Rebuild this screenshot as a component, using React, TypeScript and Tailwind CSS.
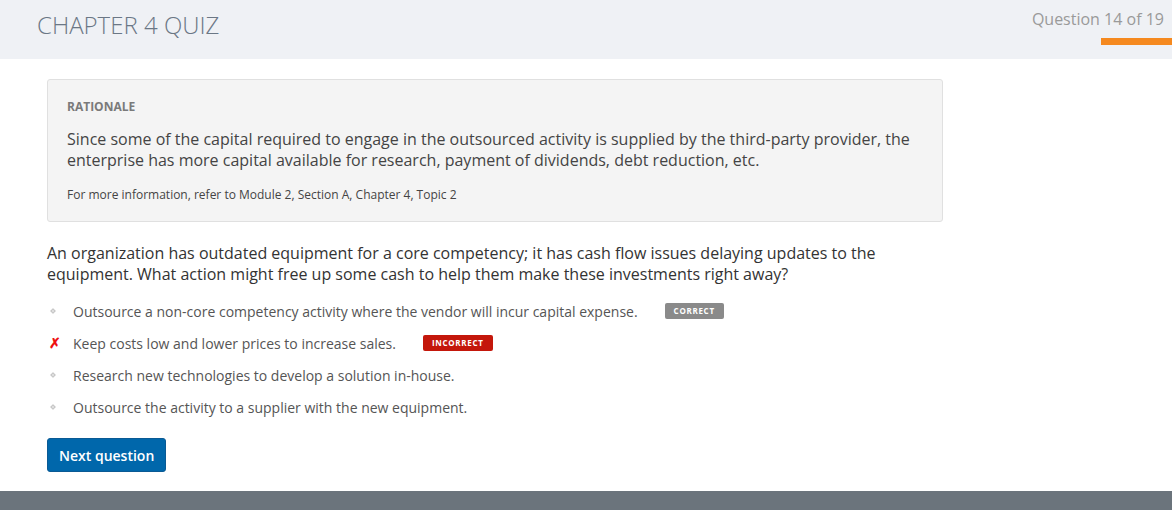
const options = [
  { text: "Outsource a non-core competency activity where the vendor will incur capital expense.", status: "correct" },
  { text: "Keep costs low and lower prices to increase sales.", status: "incorrect" },
  { text: "Research new technologies to develop a solution in-house.", status: "" },
  { text: "Outsource the activity to a supplier with the new equipment.", status: "" },
];

function Bullet({ wrong }: { wrong: boolean }) {
  if (wrong) {
    return <span className="w-[26px] pl-[2px] text-[14px] font-bold leading-none text-[#ee1111]">✗</span>;
  }
  return (
    <span className="flex w-[26px] items-center pl-[4px]">
      <span className="h-[4px] w-[4px] rotate-45 border border-[#c4c4c4] bg-[#e2e2e2]" />
    </span>
  );
}

export default function App() {
  return (
    <div className="flex h-[510px] flex-col bg-white font-['Open_Sans',sans-serif] text-[#333]">
      <header className="flex h-[59px] shrink-0 justify-between bg-[#eff1f5]">
        <h1 className="pl-[37px] pt-[8px] text-[24px] font-light leading-[34px] text-[#6b7785]">CHAPTER 4 QUIZ</h1>
        <div className="flex flex-col items-end pt-[8px]">
          <span className="pr-[8px] text-[16px] leading-[22px] text-[#9a9a9a]">Question 14 of 19</span>
          <span className="mt-[8px] h-[7px] w-[71px] bg-[#f5891f]" />
        </div>
      </header>

      <main className="flex-1 pl-[47px] pt-[20px]">
        <section className="w-[896px] rounded-[3px] border border-[#e0e0e0] bg-[#f4f4f4] px-[19px] pb-[17px] pt-[18px]">
          <h2 className="text-[12px] font-bold leading-[18px] text-[#7a7a7a]">RATIONALE</h2>
          <p className="mt-[13px] text-[16px] leading-[21px] text-[#444]">
            Since some of the capital required to engage in the outsourced activity is supplied by the third-party provider, the
            enterprise has more capital available for research, payment of dividends, debt reduction, etc.
          </p>
          <p className="mt-[15px] text-[12px] leading-[18px] text-[#444]">
            For more information, refer to Module 2, Section A, Chapter 4, Topic 2
          </p>
        </section>

        <p className="mt-[21px] w-[880px] text-[16px] leading-[21px] text-[#333]">
          An organization has outdated equipment for a core competency; it has cash flow issues delaying updates to the
          equipment. What action might free up some cash to help them make these investments right away?
        </p>

        <ul className="mt-[10px] flex flex-col">
          {options.map((option) => (
            <li key={option.text} className="flex h-[32px] items-center text-[14px] text-[#555]">
              <Bullet wrong={option.status === "incorrect"} />
              <span>{option.text}</span>
              {option.status === "correct" ? (
                <span className="ml-[27px] rounded-[2px] bg-[#8a8a8a] px-[9px] text-[8px] font-bold leading-[16px] tracking-[0.7px] text-white">
                  CORRECT
                </span>
              ) : null}
              {option.status === "incorrect" ? (
                <span className="ml-[27px] rounded-[2px] bg-[#c4170b] px-[9px] text-[8px] font-bold leading-[16px] tracking-[0.7px] text-white">
                  INCORRECT
                </span>
              ) : null}
            </li>
          ))}
        </ul>

        <button className="mt-[15px] h-[34px] rounded-[3px] border border-[#0a5a94] bg-[#0067ab] px-[11px] text-[14px] font-semibold text-white">
          Next question
        </button>
      </main>

      <footer className="h-[19px] shrink-0 bg-[#6b747c]" />
    </div>
  );
}
